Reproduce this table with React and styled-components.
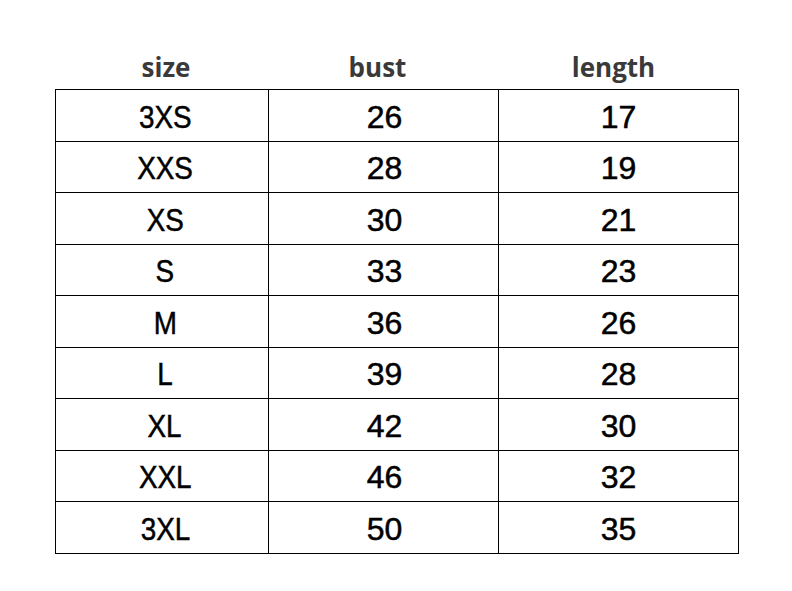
import React from "react";
import styled, { createGlobalStyle } from "styled-components";

const Global = createGlobalStyle`
  html, body { margin: 0; padding: 0; background: #ffffff; }
  body { width: 792px; height: 591px; overflow: hidden; }
`;

const Page = styled.div`
  padding: 45px 0 0 55px;
`;

const Table = styled.table`
  border-collapse: collapse;
  table-layout: fixed;
  width: 684px;
`;

const Col = styled.col`
  width: ${(p) => p.$w}px;
`;

const HeadCell = styled.th`
  height: 44px;
  padding: 0 ${(p) => p.$pr || 0}px 0 ${(p) => p.$pl || 0}px;
  font-family: "Open Sans", "Noto Sans", sans-serif;
  font-weight: 700;
  font-size: 26px;
  line-height: 44px;
  color: #3a3a3a;
  text-align: center;
  vertical-align: middle;
  border: none;
`;

const Row = styled.tr`
  height: 51.5px;
`;

const Cell = styled.td`
  border: 1.5px solid #000;
  padding: 3px 0 0 ${(p) => p.$pl || 0}px;
  font-family: "Liberation Sans", Arial, sans-serif;
  font-size: 32px;
  line-height: 1;
  color: #000;
  -webkit-text-stroke: 0.5px #000;
  text-align: center;
  vertical-align: middle;
`;

const SizeLabel = styled.span`
  display: inline-block;
  transform: scaleX(0.87);
`;

const rows = [
  ["3XS", 26, 17],
  ["XXS", 28, 19],
  ["XS", 30, 21],
  ["S", 33, 23],
  ["M", 36, 26],
  ["L", 39, 28],
  ["XL", 42, 30],
  ["XXL", 46, 32],
  ["3XL", 50, 35],
];

export default function App() {
  return (
    <Page>
      <Global />
      <Table>
        <colgroup>
          <Col $w={213} />
          <Col $w={230} />
          <Col $w={240} />
        </colgroup>
        <thead>
          <tr>
            <HeadCell $pl={8}>size</HeadCell>
            <HeadCell $pr={12}>bust</HeadCell>
            <HeadCell $pr={10}>length</HeadCell>
          </tr>
        </thead>
        <tbody>
          {rows.map(([s, b, l]) => (
            <Row key={s}>
              <Cell $pl={6}>
                <SizeLabel>{s}</SizeLabel>
              </Cell>
              <Cell $pl={2}>{b}</Cell>
              <Cell>{l}</Cell>
            </Row>
          ))}
        </tbody>
      </Table>
    </Page>
  );
}
